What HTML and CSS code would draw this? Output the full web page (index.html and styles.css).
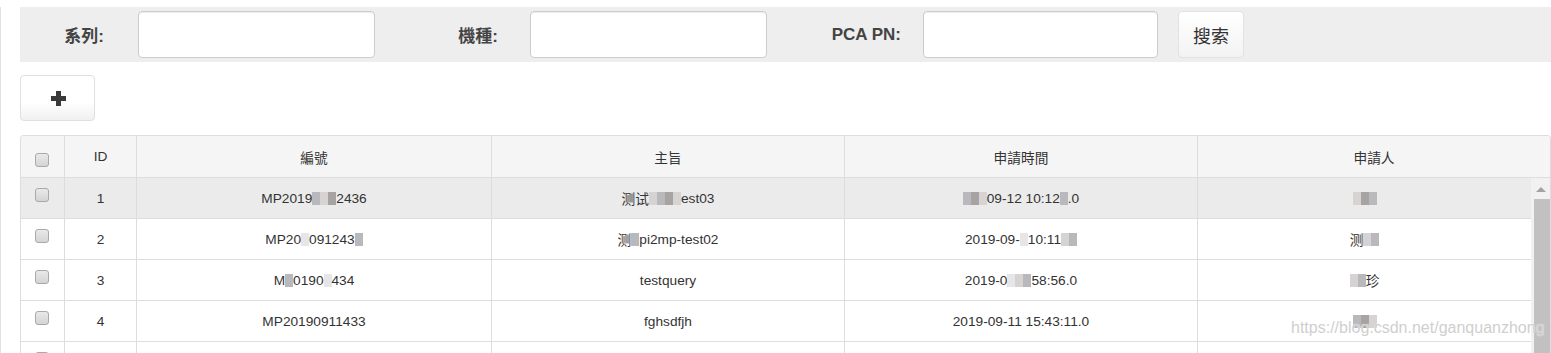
FILE: index.html
```html
<!DOCTYPE html>
<html lang="zh-Hant">
<head>
    <meta charset="UTF-8">
    <meta name="viewport" content="width=device-width, initial-scale=1.0">
    <title>申請列表</title>
    <link rel="stylesheet" href="styles.css">
</head>
<body>

    <div class="page">
        <div class="filter">
            <label class="lbl lbl-series">系列:</label>
            <input type="text" class="field">
            <label class="lbl lbl-model">機種:</label>
            <input type="text" class="field field-model">
            <label class="lbl lbl-pn">PCA PN:</label>
            <input type="text" class="field field-pn">
            <button class="btn-search">搜索</button>
        </div>

        <div class="toolbar">
            <button class="btn-add" title="新增">
                <svg width="15" height="15" viewBox="0 0 15 15">
                    <path d="M5 0h5v5h5v5h-5v5h-5v-5h-5v-5h5z" fill="#3a3a3a"/>
                </svg>
            </button>
        </div>

        <div class="grid-box">
            <div class="grid-head">
                <div class="cell"><span class="chk"></span></div>
                <div class="cell">ID</div>
                <div class="cell">編號</div>
                <div class="cell">主旨</div>
                <div class="cell">申請時間</div>
                <div class="cell">申請人</div>
            </div>
            <div class="grid-body">
                <div class="grid-rows">
                    <div class="row active">
                        <div class="cell"><span class="chk"></span></div>
                        <div class="cell">1</div>
                        <div class="cell">MP2019<span class="mz m1"></span><span class="mz m2"></span><span class="mz m3"></span>2436</div>
                        <div class="cell">测试<span class="mz m2"></span><span class="mz m1"></span><span class="mz m3"></span><span class="mz m2"></span>est03</div>
                        <div class="cell"><span class="mz m1"></span><span class="mz m3"></span><span class="mz m2"></span>09-12 10:12<span class="mz m1"></span>.0</div>
                        <div class="cell"><span class="mz m2"></span><span class="mz m3"></span><span class="mz m1"></span></div>
                    </div>
                    <div class="row">
                        <div class="cell"><span class="chk"></span></div>
                        <div class="cell">2</div>
                        <div class="cell">MP20<span class="mz m4"></span>091243<span class="mz m1"></span></div>
                        <div class="cell">测<span class="mz m1"></span>pi2mp-test02</div>
                        <div class="cell">2019-09-<span class="mz m4"></span>10:11<span class="mz m2"></span><span class="mz m1"></span></div>
                        <div class="cell">测<span class="mz m2"></span><span class="mz m1"></span></div>
                    </div>
                    <div class="row">
                        <div class="cell"><span class="chk"></span></div>
                        <div class="cell">3</div>
                        <div class="cell">M<span class="mz m1"></span>0190<span class="mz m4"></span>434</div>
                        <div class="cell">testquery</div>
                        <div class="cell">2019-0<span class="mz m4"></span><span class="mz m2"></span><span class="mz m1"></span>58:56.0</div>
                        <div class="cell"><span class="mz m2"></span><span class="mz m1"></span>珍</div>
                    </div>
                    <div class="row">
                        <div class="cell"><span class="chk"></span></div>
                        <div class="cell">4</div>
                        <div class="cell">MP20190911433</div>
                        <div class="cell">fghsdfjh</div>
                        <div class="cell">2019-09-11 15:43:11.0</div>
                        <div class="cell"><span class="mz m1"></span><span class="mz m3"></span><span class="mz m2"></span></div>
                    </div>
                    <div class="row">
                        <div class="cell"><span class="chk"></span></div>
                        <div class="cell"></div>
                        <div class="cell"></div>
                        <div class="cell"></div>
                        <div class="cell"></div>
                        <div class="cell"></div>
                    </div>
                </div>
                <div class="vscroll">
                    <span class="arrow"></span>
                    <span class="thumb"></span>
                </div>
            </div>
        </div>

        <div class="watermark">https://blog.csdn.net/ganquanzhong</div>
    </div>

</body>
</html>
```

FILE: styles.css
```css
html, body {
    overflow: hidden;
}

body {
    margin: 0;
    font-family: "Liberation Sans", Arial, "Noto Sans CJK TC", sans-serif;
    color: #333;
    background-color: #fff;
}

.page {
    position: relative;
    border-left: 1px solid #e2e2e2;
    padding-left: 19px;
    height: 353px;
    box-sizing: border-box;
}

/* filter bar */
.filter {
    display: flex;
    align-items: center;
    margin-top: 7px;
    height: 55px;
    background-color: #eee;
}

.lbl {
    font-size: 17px;
    font-weight: bold;
    color: #444;
    text-align: right;
    flex: none;
}

.lbl-series { width: 84px; }
.lbl-model { width: 123px; }
.lbl-pn { width: 134px; }

.field {
    flex: none;
    width: 237px;
    height: 47px;
    box-sizing: border-box;
    margin-left: 34px;
    border: 1px solid #ccc;
    border-radius: 4px;
    background-color: #fff;
    box-shadow: inset 0 1px 1px rgba(0, 0, 0, 0.075);
    outline: none;
}

.field-model { margin-left: 32px; }
.field-pn { margin-left: 22px; width: 235px; }

.btn-search {
    flex: none;
    margin-left: 20px;
    width: 66px;
    height: 47px;
    border: 1px solid #e2e2e2;
    border-radius: 4px;
    background: linear-gradient(#fff, #f3f3f3);
    font-family: "Liberation Sans", "Noto Sans CJK TC", sans-serif;
    font-size: 18px;
    color: #333;
    padding: 0;
}

/* toolbar */
.toolbar {
    margin-top: 13px;
    height: 46px;
}

.btn-add {
    width: 75px;
    height: 46px;
    border: 1px solid #e0e0e0;
    border-radius: 4px;
    background: linear-gradient(#fff 60%, #f0f0f0);
    padding: 0;
    display: flex;
    align-items: center;
    justify-content: center;
}

.btn-add svg {
    margin-left: 2px;
    margin-top: 1px;
}

/* grid */
.grid-box {
    margin-top: 14px;
    border: 1px solid #ddd;
    border-bottom: none;
    border-radius: 4px 4px 0 0;
    font-size: 13.7px;
    overflow: hidden;
}

.grid-head,
.row {
    display: grid;
    grid-template-columns: 43px 72px 355px 353px 353px 1fr;
}

.grid-head {
    height: 42px;
    background-color: #f5f5f5;
    border-bottom: 1px solid #ddd;
    box-sizing: border-box;
}

.cell {
    display: flex;
    align-items: center;
    justify-content: center;
    border-left: 1px solid #ddd;
    white-space: nowrap;
}

.cell:first-child {
    border-left: none;
}

.grid-head .cell:first-child {
    padding-top: 7px;
}

.grid-body {
    display: flex;
    height: 200px;
}

.grid-rows {
    flex: 1;
}

.row {
    height: 41px;
    box-sizing: border-box;
    border-bottom: 1px solid #ddd;
}

.row .cell:first-child {
    padding-bottom: 7px;
    box-sizing: border-box;
}

.row.active {
    background-color: #ebebeb;
}

.chk {
    display: inline-block;
    width: 12px;
    height: 12px;
    margin-left: -2px;
    border: 1px solid #a9a9a9;
    border-radius: 3px;
    background: linear-gradient(#e9e9e9, #d4d4d4);
}

/* pixelated bits */
.mz {
    display: inline-block;
    width: 8px;
    height: 13px;
}

.m1 { background-color: #b9b9bd; }
.m2 { background-color: #d6d3d2; }
.m3 { background-color: #a7a3a3; }
.m4 { background-color: #e6e6e8; }

/* scrollbar */
.vscroll {
    flex: none;
    width: 19px;
    background-color: #f1f1f1;
    display: flex;
    flex-direction: column;
    align-items: flex-end;
}

.arrow {
    width: 0;
    height: 0;
    margin: 9px 4px 0 0;
    border-left: 5px solid transparent;
    border-right: 5px solid transparent;
    border-bottom: 5px solid #a3a3a3;
}

.thumb {
    margin-top: 7px;
    width: 16px;
    flex: 1;
    background-color: #c1c1c1;
}

.watermark {
    position: absolute;
    left: 1290px;
    top: 312px;
    font-size: 16px;
    color: #cfcfcf;
    text-shadow: 0 0 1px #fff;
}
```
